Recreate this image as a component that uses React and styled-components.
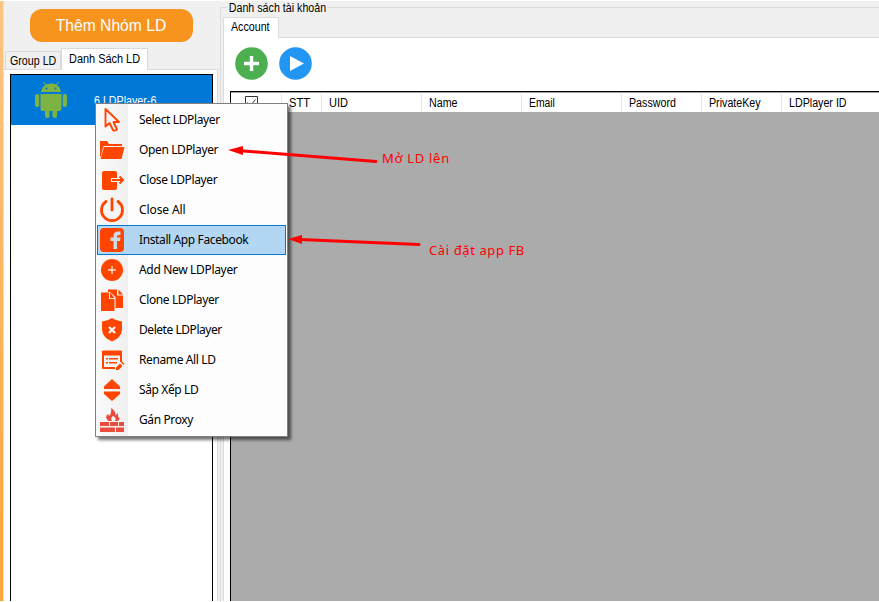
import React from "react";
import styled, { createGlobalStyle } from "styled-components";

const Global = createGlobalStyle`
  * { box-sizing: border-box; }
  body { margin: 0; background: #fff; overflow: hidden; }
`;

const Window = styled.div`
  position: relative;
  display: flex;
  width: 879px;
  height: 602px;
  padding: 1px 0;
  overflow: hidden;
  color: #000;
  font: 12px/14px "Liberation Sans", Arial, sans-serif;
  background: #fff;
`;
const Accent = styled.div`
  width: 4px;
  flex: none;
  border-right: 1px solid #e6e0da;
  background: linear-gradient(#fbc583, #fca63f 90%);
`;
const Text = styled.span`
  display: block;
  white-space: nowrap;
  letter-spacing: ${(p) => p.$spacing || 0}px;
`;
const Narrow = styled(Text)`
  transform: scaleX(${(p) => p.$scale || 0.89});
  transform-origin: ${(p) => p.$origin || "left"};
`;

const Sidebar = styled.aside`
  display: flex;
  flex-direction: column;
  width: 216px;
  flex: none;
  background: #f0f0f0;
`;
const GroupButton = styled.button`
  width: 163px;
  height: 33px;
  flex: none;
  margin: 8px 0 0 26px;
  padding: 0 2px 0 0;
  border: 0;
  border-radius: 12px;
  display: flex;
  align-items: center;
  justify-content: center;
  color: #fff;
  background: #f7941d;
  font: 17px/20px "Liberation Sans", Arial, sans-serif;
`;
const SideTabs = styled.div`
  display: flex;
  align-items: flex-end;
  height: 27px;
  flex: none;
  padding-left: 1px;
`;
const Tab = styled.div`
  height: ${(p) => (p.$active ? 22 : 18)}px;
  width: ${(p) => p.$width}px;
  padding: ${(p) => (p.$active ? 3 : 2)}px 0 0 ${(p) => p.$pad}px;
  margin-bottom: ${(p) => (p.$active ? -1 : 0)}px;
  border: 1px solid #d9d9d9;
  border-bottom: 0;
  z-index: 1;
  background: ${(p) => (p.$active ? "#fff" : "#f0f0f0")};
`;
const SidePane = styled.div`
  flex: 1;
  width: 214px;
  padding: 4px 4px 0 6px;
  border: 1px solid #dcdcdc;
  border-width: 1px 1px 0 0;
  background: #fff;
`;
const DeviceList = styled.div`
  height: 100%;
  border: 1px solid #000;
  border-bottom: 0;
`;
const Device = styled.div`
  display: flex;
  height: 50px;
  padding: 6px 0 0 23px;
  color: #fff;
  background: #0078d7;
`;
const DeviceName = styled(Narrow)`
  margin: 13px 0 0 26px;
`;

const GroupBox = styled.main`
  position: relative;
  display: flex;
  flex: 1;
  padding: 16px 0 0 2px;
  background: #f0f0f0;
  &::before {
    content: "";
    position: absolute;
    inset: 6px -2px -2px 0;
    border: 1px solid #dcdcdc;
  }
`;
const Legend = styled(Narrow)`
  position: absolute;
  left: 7px;
  top: 0;
  padding: 0 2px;
  background: #f0f0f0;
`;
const TabControl = styled.div`
  position: relative;
  display: flex;
  flex-direction: column;
  flex: 1;
`;
const AccountTab = styled.div`
  position: relative;
  z-index: 1;
  width: 56px;
  height: 21px;
  margin: 0 0 -1px 1px;
  padding: 2px 0 0 7px;
  flex: none;
  border: 1px solid #dcdcdc;
  border-bottom: 0;
  background: #fff;
`;
const AccountPane = styled.div`
  display: flex;
  flex-direction: column;
  flex: 1;
  margin-left: 1px;
  padding-left: 6px;
  border: 1px solid #dcdcdc;
  border-width: 1px 0 0 1px;
  background: #fff;
`;
const Toolbar = styled.div`
  display: flex;
  gap: 11px;
  height: 53px;
  padding: 9px 0 0 5px;
`;
const Grid = styled.div`
  flex: 1;
  border: 1px solid #000;
  border-width: 1px 0 0 1px;
  background: #ababab;
`;
const HeaderRow = styled.div`
  display: flex;
  height: 20px;
  padding-top: 1px;
  border-top: 1px solid #a0a0a0;
  background: #fff;
`;
const HeaderCell = styled.div`
  flex: none;
  width: ${(p) => p.$width}px;
  padding: 2px 0 0 ${(p) => p.$pad ?? 7}px;
  border-right: 1px solid #e5e5e5;
`;

const Menu = styled.nav`
  position: absolute;
  left: 95px;
  top: 103px;
  width: 193px;
  height: 334px;
  padding: 1px;
  border: 1px solid #808080;
  background: linear-gradient(90deg, #fafafa, #f0f0f0 32px, #fdfdfd 32px);
  box-shadow: 3px 3px 3px rgba(0, 0, 0, 0.55);
  font: 12px/16px "Noto Sans", "Open Sans", sans-serif;
`;
const MenuItem = styled.div`
  display: flex;
  align-items: center;
  gap: 14px;
  height: 30px;
  width: 189px;
  padding-left: ${(p) => (p.$active ? 1 : 2)}px;
  border: ${(p) => (p.$active ? "1px solid #0078d7" : "0")};
  background: ${(p) => (p.$active ? "#b3d7f3" : "transparent")};
`;
const Icon = styled.svg`
  display: block;
  flex: none;
  width: 26px;
  height: 26px;
`;
const Arrows = styled.svg`
  position: absolute;
  left: 228px;
  top: 140px;
`;
const Note = styled(Text)`
  position: absolute;
  left: ${(p) => p.$x}px;
  top: ${(p) => p.$y}px;
  color: #f00;
  font: 13px/18px "Noto Sans", sans-serif;
`;

const O = "#ff4500";
const icons = {
  cursor: <path d="M6.5 2v17.5l4-3.5 3.5 7q1.500 1.500 4-.5l-3.500-7.500h5.500z" fill="none" stroke={O} strokeWidth="1.9" strokeLinejoin="round" />,
  folder: <g fill={O}><path d="M1 4h7l2 3h13v2H4.500L1.500 20H1z" /><path d="M5 10h20.500l-3 12H1.500z" /></g>,
  close: <><path fill={O} d="M5 4h11q2 0 2 2v5h-6v4h6v6q0 2-2 2H5q-2 0-2-2V6q0-2 2-2z" /><path d="M13 13h11M20.500 9.500l3.500 3.500-3.500 3.500" fill="none" stroke={O} strokeWidth="2" /></>,
  power: <path d="M7 4.500a10.500 10.500 0 1 0 12 0M13 2v11" fill="none" stroke={O} strokeWidth="2.800" strokeLinecap="round" />,
  facebook: <><rect x="1" y="1" width="24" height="24" rx="4" fill={O} /><path d="M14.500 22v-8h-3v-3.500h3V9q0-4.500 4.500-4.500h2.500V8H20q-2 0-2 1.500v1h3.500L21 14h-3v8z" fill="#c9dcec" /></>,
  add: <><circle cx="13" cy="13" r="11" fill={O} /><path d="M13 9v8M9 13h8" stroke="#ffe8df" strokeWidth="1.300" /></>,
  clone: (
    <g fill={O}>
      <path d="M9 2.500h9v6h6V21h-7.500V10L11 5H9z" />
      <path d="M19.500 2.500L24 7.500h-4.500z" />
      <path d="M2 5.500h8v6.500h5.500V24H2z" />
      <path d="M11 5.500l4.500 5.500H11z" />
    </g>
  ),
  shield: <><path d="M13 1q4 3 10 3.500v8.500q-1 8-10 11.500Q4 21 3 13V4.500Q9 4 13 1z" fill={O} /><path d="M10 10l6 6m0-6l-6 6" stroke="#fff" strokeWidth="2.200" /></>,
  rename: (
    <g fill={O}>
      <path d="M4 3.500h18q1 0 1 1V15h-2V8.500H5V20h11v2H4q-1 0-1-1V4.500q0-1 1-1z" />
      <path d="M7 11h2v1.500H7zm3 0h9v1.500h-9zm-3 4h2v1.500H7zm3 0h8v1.500h-8z" />
      <path d="M17 20.500l4-4 2.500 2.500-4 4H17zM22 15.500l1-1 2.500 2.500-1 1z" />
    </g>
  ),
  sort: <path d="M13 2l8 7.500V12H5V9.500zM5 14.500h16V17l-8 7-8-7z" fill={O} />,
  fire: (
    <g fill="#e94b3c">
      <path d="M9.500 14Q5 10 9 7l1 2q3-3 2-8 5 3 4.500 7.500L19 6v3.500q3 2 0 4.500h-3q2-3-2-5-3 2-1 5z" />
      <path d="M1 15h9v4H1zm10 0h8v4h-8zm9 0h5v4h-5zM1 20.500h15V25H1zm16 0h8V25h-8z" />
    </g>
  ),
};

const menuItems = [
  ["cursor", "Select LDPlayer"], ["folder", "Open LDPlayer"], ["close", "Close LDPlayer"],
  ["power", "Close All", -0.1], ["facebook", "Install App Facebook"], ["add", "Add New LDPlayer", -0.33],
  ["clone", "Clone LDPlayer"], ["shield", "Delete LDPlayer", -0.45], ["rename", "Rename All LD"],
  ["sort", "Sắp Xếp LD"], ["fire", "Gán Proxy"],
];
const columns = [["STT", 40, 0.93], ["UID", 100, 0.92], ["Name", 100], ["Email", 100, 0.86], ["Password", 80], ["PrivateKey", 80], ["LDPlayer ID", 100]];

const Android = () => (
  <svg width="34" height="38" viewBox="0 0 34 38">
    <g fill="#7cb342">
      <path d="M7 11q1-8.500 10-8.500t10 8.500zM6.500 13h21v15q0 2-2 2h-17q-2 0-2-2z" />
      <rect x="1" y="13" width="4.300" height="13" rx="2" /><rect x="28.700" y="13" width="4.300" height="13" rx="2" />
      <rect x="11" y="26" width="4.500" height="11" rx="2" /><rect x="18.500" y="26" width="4.500" height="11" rx="2" />
    </g>
    <path d="M9.500 1l3 4m12-4l-3 4" stroke="#7cb342" />
    <circle cx="12.500" cy="7.500" r="1" fill="#0078d7" /><circle cx="21.500" cy="7.500" r="1" fill="#0078d7" />
  </svg>
);

export default function App() {
  return (
    <Window>
      <Global />
      <Accent />
      <Sidebar>
        <GroupButton><Narrow $scale={0.92} $origin="center">Thêm Nhóm LD</Narrow></GroupButton>
        <SideTabs>
          <Tab $width={56} $pad={4}><Narrow>Group LD</Narrow></Tab>
          <Tab $active $width={87} $pad={7}><Narrow $scale={0.91}>Danh Sách LD</Narrow></Tab>
        </SideTabs>
        <SidePane>
          <DeviceList>
            <Device><Android /><DeviceName>6 LDPlayer-6</DeviceName></Device>
          </DeviceList>
        </SidePane>
      </Sidebar>
      <GroupBox>
        <Legend>Danh sách tài khoản</Legend>
        <TabControl>
          <AccountTab><Narrow>Account</Narrow></AccountTab>
          <AccountPane>
            <Toolbar>
              <svg width="33" height="33" viewBox="0 0 33 33"><circle cx="16.5" cy="16.5" r="16.3" fill="#4caf50" /><path d="M16.5 9v15M9 16.5h15" stroke="#fff" strokeWidth="3.4" /></svg>
              <svg width="33" height="33" viewBox="0 0 33 33"><circle cx="16.5" cy="16.5" r="16.3" fill="#2196f3" /><path d="M11 9v15l14-7.5z" fill="#fff" /></svg>
            </Toolbar>
            <Grid>
              <HeaderRow>
                <HeaderCell $width={51} $pad={14}>
                  <svg width="13" height="13" viewBox="0 0 13 13"><path d="M.5.5h12v12H.5z" fill="#fff" stroke="#333" /><path d="M2.5 6.5l3 3 5-6" fill="none" stroke="#333" /></svg>
                </HeaderCell>
                {columns.map(([name, width, scale]) => (
                  <HeaderCell key={name} $width={width}><Narrow $scale={scale}>{name}</Narrow></HeaderCell>
                ))}
              </HeaderRow>
            </Grid>
          </AccountPane>
        </TabControl>
      </GroupBox>
      <Menu>
        {menuItems.map(([icon, label, spacing = -0.38]) => (
          <MenuItem key={label} $active={icon === "facebook"}>
            <Icon viewBox="0 0 26 26">{icons[icon]}</Icon>
            <Text $spacing={spacing}>{label}</Text>
          </MenuItem>
        ))}
      </Menu>
      <Arrows width="200" height="120" viewBox="0 0 200 120">
        <path d="M10 10.5L148 21.5M72 99.5L191 104.5" stroke="#f00" strokeWidth="3" strokeLinecap="round" />
        <path d="M0 10l15-4v9zM60 99l14-4v9z" fill="#f00" />
      </Arrows>
      <Note $x={382} $y={149} $spacing={0.7}>Mở LD lên</Note>
      <Note $x={429} $y={241} $spacing={0.6}>Cài đặt app FB</Note>
    </Window>
  );
}
